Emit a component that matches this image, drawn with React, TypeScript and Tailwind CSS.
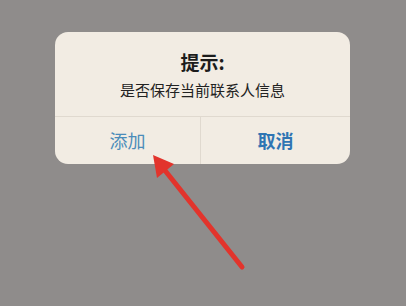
import React from 'react';

const ArrowMark = () => (
  <svg className="absolute left-0 top-0" width="406" height="306" viewBox="0 0 406 306">
    <line x1="242" y1="267" x2="163" y2="168" stroke="#e2342c" strokeWidth="5" strokeLinecap="round" />
    <polygon points="153,155 174,164 157,178" fill="#e2342c" />
  </svg>
);

const App = () => {
  return (
    <div
      className="relative w-[406px] h-[306px] overflow-hidden bg-[#8f8c8b] pl-[55px] pt-[32px]"
      style={{ fontFamily: '"Noto Sans CJK SC", "Noto Sans", sans-serif' }}
    >
      <div className="w-[295px] h-[132px] rounded-[13px] bg-[#f2ece3] flex flex-col">
        <div className="h-[84px] flex flex-col items-center pt-[17px]">
          <div className="text-[19px] leading-[26px] font-bold text-[#1c1c1c]">提示:</div>
          <div className="mt-[5px] text-[15px] leading-[20px] text-[#222]">是否保存当前联系人信息</div>
        </div>
        <div className="flex-1 flex border-t border-[#e0d9cf]">
          <div className="w-[146px] flex items-center justify-center border-r border-[#e0d9cf]">
            <span className="text-[18px] text-[#4b8cba]">添加</span>
          </div>
          <div className="flex-1 flex items-center justify-center">
            <span className="text-[18px] font-bold text-[#2f75b3]">取消</span>
          </div>
        </div>
      </div>
      <ArrowMark />
    </div>
  );
};

export default App;
